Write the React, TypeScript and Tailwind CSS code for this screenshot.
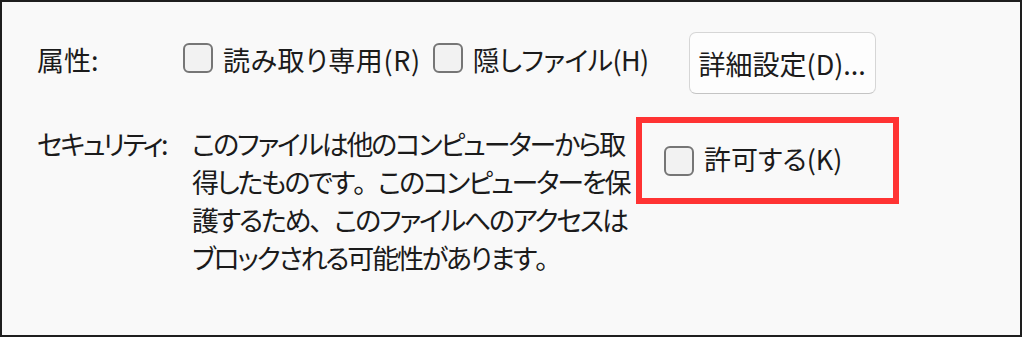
import React from "react";

function Box() {
  return (
    <span className="inline-block w-[30px] h-[30px] shrink-0 rounded-[6px] border-2 border-[#767676] bg-[#f2f2f2]" />
  );
}

function P({ c }: { c: string }) {
  return <span className="[font-feature-settings:normal]">{c}</span>;
}

export default function App() {
  return (
    <div className="w-[1024px] h-[339px] bg-white">
      <div
        className="w-[1022px] h-[337px] border-2 border-[#1e1e1e] bg-[#f9f9f9] text-[#1b1b1b] text-[27px] leading-[38px] [font-feature-settings:'palt'] pl-[35px] pt-[30px]"
        style={{ fontFamily: '"Noto Sans CJK JP", "Noto Sans", sans-serif' }}
      >
        <div className="flex items-center h-[62px]">
          <span className="w-[146px] whitespace-nowrap mb-[6px]">属性:</span>
          <span className="mb-[2px]"><Box /></span>
          <span className="ml-[10px] whitespace-nowrap mb-[6px] tracking-[0.6px]">読み取り専用(R)</span>
          <span className="ml-[12px] mb-[2px]"><Box /></span>
          <span className="ml-[10px] whitespace-nowrap mb-[6px] tracking-[-0.6px]">隠しファイル(H)</span>
          <button className="ml-[40px] h-[62px] px-[9px] rounded-[7px] border border-[#d6d6d6] border-b-[#c4c4c4] bg-[#fdfdfd] whitespace-nowrap pt-[1px]">
            詳細設定(D)...
          </button>
        </div>
        <div className="flex items-start mt-[23px]">
          <span className="w-[155px] mt-[8px] whitespace-nowrap tracking-[-2.6px]">セキュリティ:</span>
          <div className="w-[444px] mt-[8px] whitespace-nowrap tracking-[-2.2px]">
            <div>このファイルは他のコンピューターから取</div>
            <div>得したものです<P c="。" />このコンピューターを保</div>
            <div>護するため<P c="、" />このファイルへのアクセスは</div>
            <div>ブロックされる可能性があります<P c="。" /></div>
          </div>
          <div className="w-[263px] h-[87px] border-[6px] border-[#ff3333] flex items-center pl-[22px]">
            <Box />
            <span className="ml-[10px] whitespace-nowrap mb-[3px]">許可する(K)</span>
          </div>
        </div>
      </div>
    </div>
  );
}
